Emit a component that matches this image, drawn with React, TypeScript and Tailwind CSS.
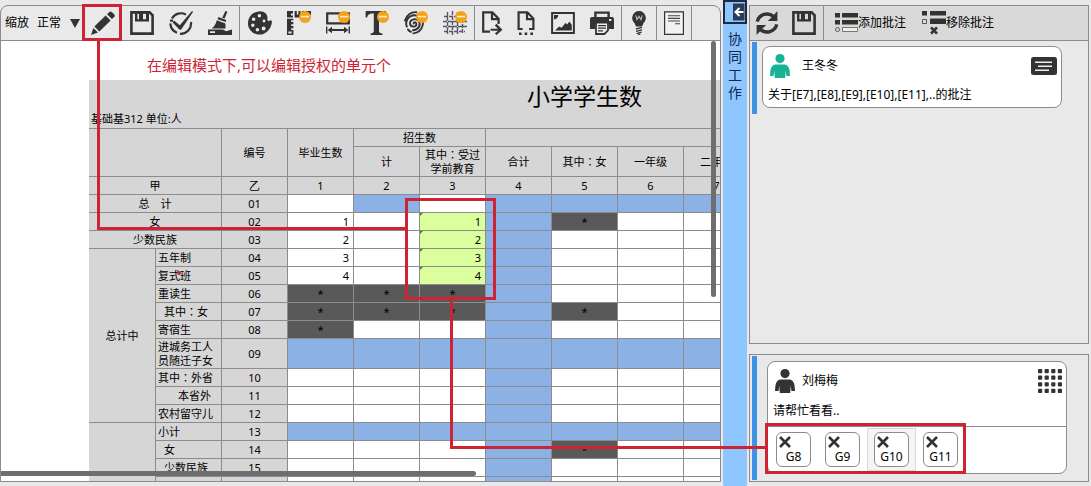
import type { ReactNode } from "react";
import clsx from "clsx";

type Fill = "none" | "blue" | "dark" | "green";
type Cell = { fill: Fill; value?: string };

const o: Cell = { fill: "none" };
const b: Cell = { fill: "blue" };
const d: Cell = { fill: "dark", value: "*" };
const n = (value: string): Cell => ({ fill: "none", value });
const g = (value: string): Cell => ({ fill: "green", value });

type Row = {
  code: string;
  label: string;
  group?: { text: string; span: number };
  wide?: boolean;
  indent?: string;
  tall?: boolean;
  cells: Cell[];
};

const rows: Row[] = [
  { code: "01", label: "总　计", wide: true, cells: [o, b, o, b, b, b, b] },
  { code: "02", label: "女", wide: true, cells: [n("1"), o, g("1"), b, d, o, o] },
  { code: "03", label: "少数民族", wide: true, cells: [n("2"), o, g("2"), b, o, o, o] },
  { code: "04", label: "五年制", group: { text: "总计中", span: 9 }, cells: [n("3"), o, g("3"), b, o, o, o] },
  { code: "05", label: "复式班", cells: [n("4"), o, g("4"), b, o, o, o] },
  { code: "06", label: "重读生", cells: [d, d, d, b, o, o, o] },
  { code: "07", label: "其中：女", indent: "pl-2", cells: [d, d, d, b, d, o, o] },
  { code: "08", label: "寄宿生", cells: [d, o, o, b, o, o, o] },
  { code: "09", label: "进城务工人员随迁子女", tall: true, cells: [b, b, b, b, b, b, b] },
  { code: "10", label: "其中：外省", cells: [o, o, o, b, o, o, o] },
  { code: "11", label: "本省外", indent: "pl-[22px]", cells: [o, o, o, b, o, o, o] },
  { code: "12", label: "农村留守儿", cells: [o, o, o, b, o, o, o] },
  { code: "13", label: "小计", group: { text: "", span: 4 }, cells: [b, b, b, b, b, b, b] },
  { code: "14", label: "女", indent: "pl-2", cells: [o, o, o, b, d, o, o] },
  { code: "15", label: "少数民族", indent: "pl-2", cells: [o, o, o, b, o, o, o] },
  { code: "", label: "", cells: [o, o, o, b, o, o, o] },
];

const line = "border-r border-b border-[#8c8c8c]";
const head = `${line} bg-[#d6d6d6] font-normal p-0 text-center`;

const fills: Record<Fill, string> = {
  none: "bg-white text-right pr-1",
  blue: "bg-[#8cb1e4]",
  dark: "bg-[#595959] text-center",
  green: "bg-[#dcff9e] text-right pr-1",
};

const Svg = ({ children, className = "size-6" }: { children: ReactNode; className?: string }) => (
  <svg viewBox="0 0 24 24" className={clsx("shrink-0", className)} fill="#333" aria-hidden="true">
    {children}
  </svg>
);

const Badge = () => (
  <g>
    <circle cx="18" cy="6" r="6" fill="#f5a21b" />
    <path d="M14 5.6H22" stroke="#fff0cc" strokeWidth="1.6" />
  </g>
);

const PencilIcon = () => (
  <Svg>
    <path d="M3.4 15.6 14.6 4.6 19.6 9.4 8.4 20.4zM16 3.3 18.3 1.1Q19.7 0 21 1.2L23.2 3.3Q24.4 4.6 23.2 6L20.9 8.1zM2.4 17 7 21.5 0 24z" />
  </Svg>
);

const SaveIcon = () => (
  <Svg>
    <path d="M1.4 1.4H19.6L22.6 4.4V22.6H1.4z" fill="none" stroke="#333" strokeWidth="2.6" />
    <path fillRule="evenodd" d="M5 1H19V10.5H5zM7.4 2.5V8.3H9V2.5zM13 2.5V8.3H16V2.5z" />
  </Svg>
);

const CheckIcon = () => (
  <Svg>
    <g fill="none" stroke="#333" strokeWidth="2.2">
      <path d="M17 3.6A10.4 10.4 0 0 0 3 7.4M1.4 12.4A10.4 10.4 0 0 0 8 21.8M11 22.8A10.4 10.4 0 0 0 22 11M1 9.6H4" />
    </g>
    <path d="M5 9.4 10.8 14.2 23 0 24 1 12 18.8 10.6 18.8 3.6 11.6z" />
  </Svg>
);

const BroomIcon = () => (
  <Svg>
    <path d="M17.4 0 19.4.7 16.6 7.6 14.2 6.8zM10.4 6 18.2 9 17.6 11 9.6 8.2zM8.8 9.2 17.4 12.4 17.6 17.6H3.6Q7.6 14.4 8.8 9.2z" />
    <path fillRule="evenodd" d="M0 18.4H15L18 20.2 24 18.6V24H0zM2 20.2H7V22H2z" />
  </Svg>
);

const PaletteIcon = () => (
  <Svg>
    <path
      fillRule="evenodd"
      d="M11 .4C17 0 20 4 19.4 7.6 19 10 20.4 10.4 22 9.4 23.8 8.6 24.2 11 23.6 13 22 19 17.6 23.6 11.8 23.6 5 23.6 0 18.4 0 12.4 0 5.6 4.6.8 11 .4zM11.4 3A1.8 1.8 0 1 0 11.4 6.6 1.8 1.8 0 1 0 11.4 3zM5.6 6.4A1.8 1.8 0 1 0 5.6 10 1.8 1.8 0 1 0 5.6 6.4zM4.8 12.4A1.8 1.8 0 1 0 4.8 16 1.8 1.8 0 1 0 4.8 12.4zM9.4 17A1.8 1.8 0 1 0 9.4 20.6 1.8 1.8 0 1 0 9.4 17zM15.6 15.4A2 2 0 1 0 15.6 19.4 2 2 0 1 0 15.6 15.4zM16 8.6A1.4 1.4 0 1 0 16 11.4 1.4 1.4 0 1 0 16 8.6z"
    />
  </Svg>
);

const RulerIcon = () => (
  <Svg>
    <path d="M0 0H6V2.4H4V4.4H6V6.4H0zM7.6 0H9.8V3.4H11.4V0H13.6V6.4H7.6zM15 0H24V4H15zM0 7.8H6.4V9.2H4.2V11H6.4V13.2H4.2V15H6.4V17.2H4.2V19H6.4V24H0zM1.4 20.6V22.4H4.6V20.6z" fillRule="evenodd" />
    <Badge />
  </Svg>
);

const WidthIcon = () => (
  <Svg>
    <path d="M1.2 2.4H22.8V12.4H1.2z" fill="none" stroke="#333" strokeWidth="2.2" />
    <path d="M0 15.6H1.4V22.4H0zM22.6 15.6H24V22.4H22.6zM1.6 19 6 15.8V18.1H18V15.8L22.4 19 18 22.2V19.9H6V22.2z" />
    <Badge />
  </Svg>
);

const TextIcon = () => (
  <Svg>
    <path d="M.6 0H21V6.4H19.6Q19 2.6 15.4 2.4H14V20Q14 22.4 17.4 22.6V24H5.6V22.6Q8.8 22.4 8.8 20V2.4H7Q3 2.6 2 6.4H.6z" />
    <Badge />
  </Svg>
);

const SpiralIcon = () => (
  <Svg>
    <g fill="none" stroke="#333" strokeWidth="1.9" strokeLinecap="round">
      <path d="M9.6 12.6C9.8 10.6 12.4 10.8 12.4 13.2 12.2 16.4 6.4 16.6 6 12.6 5.8 8 12.6 6.6 15 10.4 17.2 14.8 14 19 9 19.2" />
      <path d="M2.8 15.6C.6 9.6 5 4.2 10.6 4.2 16.8 4.2 20 9.4 18.6 14.4 17.6 18.6 14 21.8 9.4 22.4M1 9.6C2.6 3.8 7.4.8 12.4 1.2M4 18.6C5 20 6 20.4 7 20.8" />
    </g>
    <Badge />
  </Svg>
);

const GridIcon = () => (
  <Svg>
    <g fill="none" stroke="#555567" strokeWidth="1.4" strokeDasharray="4 1">
      <path d="M4.5 1V23M9.5 0V24M14.5 1V23M19.5 3V22M1 5.5H22M0 10.5H24M0 15.5H24M1 20.5H22" />
    </g>
    <Badge />
  </Svg>
);

const ExportIcon = () => (
  <Svg>
    <path d="M10 20.6H3.2V1.4H12.4L18.6 7.6V13M12 1.4V8.2H18.6" fill="none" stroke="#333" strokeWidth="2.2" />
    <path d="M10.6 17.8H18L14.8 14.4 16.6 12.8 22.4 18.8 16.6 24 14.8 22.6 18 19.8H10.6z" />
  </Svg>
);

const MoreDocIcon = () => (
  <Svg>
    <path d="M8.6 18H4.6V1.4H13.4L19.4 7.6V18H15M13 1.4V8.2H19.4" fill="none" stroke="#333" strokeWidth="2.2" />
    <path d="M5 21.4H7.6V24H5zM10.6 21.4H13.2V24H10.6zM16.4 21.4H19V24H16.4z" />
  </Svg>
);

const ImageIcon = () => (
  <Svg>
    <path d="M1.1 2.1H22.9V21.9H1.1z" fill="none" stroke="#333" strokeWidth="2" />
    <path d="M4 19.6 8 15.6 10.6 16.8 14.4 12 16.2 13.4 18.4 10.6 20.8 14V19.6zM3 4H7.4Q7 8 3 8.4z" />
  </Svg>
);

const PrintIcon = () => (
  <Svg>
    <path d="M5.4 7V1.6H18.6V7" fill="none" stroke="#333" strokeWidth="2.4" />
    <path fillRule="evenodd" d="M2 6H22Q24 6 24 8V18H19V13H5V18H0V8Q0 6 2 6zM19 8V10H21.4V8z" />
    <path d="M6 11.6H18V19.4L14.4 23H6z" fill="#eee" stroke="#333" strokeWidth="1.8" />
    <path d="M8 14.6H16M8 17.2H16M8 19.8H13" stroke="#333" strokeWidth="1.2" />
  </Svg>
);

const BulbIcon = () => (
  <Svg>
    <path d="M12 0A7 7 0 0 1 16.4 12.2L15 15.4H9L7.6 12.2A7 7 0 0 1 12 0z" />
    <path d="M8.8 4.4 10 8.6 12 5.4 14 8.6 15.2 4.4" fill="none" stroke="#bbb" strokeWidth="1.1" />
    <path d="M9 18 15 16.4M9 20.4 15 18.8M9.6 22.6 14.6 21.2M11 24 13.4 23" stroke="#333" strokeWidth="1.3" />
  </Svg>
);

const SheetIcon = () => (
  <Svg>
    <path d="M2.6.8H21.4V23.4H2.6z" fill="#f2f2f2" stroke="#333" strokeWidth="1.2" />
    <path d="M6 4.8H18M6 7.4H18M6 10H18M13 12.8H18" stroke="#444" strokeWidth="1.1" />
  </Svg>
);

const RefreshIcon = () => (
  <Svg>
    <path d="M2.2 10.6A10 10 0 0 1 18.6 5.6M21.8 13.4A10 10 0 0 1 5.4 18.4" fill="none" stroke="#333" strokeWidth="3.4" />
    <path d="M22.4 0V10H12.8L16.4 6.4zM1.6 24V14H11.2L7.6 17.6z" />
  </Svg>
);

const AddNoteIcon = () => (
  <Svg>
    <path d="M1 2H6V6.6H1zM1 9H6V13.6H1zM8 2H24V6.6H8zM8 9H24V13.6H8z" />
    <path d="M8.5 16.5H23.5V20.5H8.5z" fill="#eee" stroke="#777" />
    <circle cx="3.5" cy="18.5" r="2" fill="none" stroke="#555" />
  </Svg>
);

const RemoveNoteIcon = () => (
  <Svg>
    <path d="M0 0H5V4.6H0zM8 0H24V4.6H8zM8 7.4H24V13H8z" />
    <path d="M.5 8.5H4.5V12.5H.5z" fill="#ddd" stroke="#555" />
    <path d="M9 16.4 15 22.6M15 16.4 9 22.6" stroke="#333" strokeWidth="2.6" />
  </Svg>
);

const PersonIcon = ({ className }: { className: string }) => (
  <svg viewBox="0 0 20 24" className={clsx("h-6 w-5 shrink-0", className)} fill="currentColor" aria-hidden="true">
    <circle cx="10" cy="4.6" r="4.6" />
    <path d="M5 10.4H15Q20 11 20 22H16.4L15.8 16.4 15.2 24H4.8L4.2 16.4 3.6 22H0Q0 11 5 10.4z" />
  </svg>
);

const NoteIcon = () => (
  <svg viewBox="0 0 26 18" className="h-[18px] w-[26px]" aria-hidden="true">
    <rect width="26" height="18" rx="2.5" fill="#333" />
    <path d="M4 5.2H21M7 9.2H21M4 13.2H18" stroke="#eee" strokeWidth="1.5" />
  </svg>
);

const DotsIcon = () => (
  <Svg>
    {[0, 6.6, 13.2, 19.8].map((y) =>
      [0, 6.6, 13.2, 19.8].map((x) => <rect key={`${x}-${y}`} x={x} y={y} width="4.2" height="4.2" rx=".8" />)
    )}
  </Svg>
);

const Tool = ({ label, narrow, children }: { label: string; narrow?: boolean; children: ReactNode }) => (
  <button type="button" aria-label={label} className={clsx("flex h-full shrink-0 items-center justify-center", narrow ? "w-[34px]" : "w-[39px]")}>
    {children}
  </button>
);

const Divider = () => <span className="h-full w-px shrink-0 bg-[#8c8c8c]" />;

const Toolbar = () => (
  <div className="flex h-[35px] shrink-0 items-center overflow-hidden border-b border-[#8c8c8c] pl-1 text-xs">
    <label htmlFor="zoom" className="w-8 shrink-0">缩放</label>
    <span className="relative flex w-[46px] shrink-0 items-center">
      <select id="zoom" className="w-full appearance-none bg-transparent">
        <option>正常</option>
      </select>
      <svg viewBox="0 0 10 9" className="pointer-events-none absolute right-[3px] h-[9px] w-[10px]" aria-hidden="true">
        <path d="M0 0H10L5 9z" fill="#333" />
      </svg>
    </span>
    <Tool label="编辑"><PencilIcon /></Tool>
    <Tool label="保存"><SaveIcon /></Tool>
    <Tool label="检查"><CheckIcon /></Tool>
    <Tool label="清除"><BroomIcon /></Tool>
    <Divider />
    <Tool label="配色"><PaletteIcon /></Tool>
    <Tool label="标尺"><RulerIcon /></Tool>
    <Tool label="列宽"><WidthIcon /></Tool>
    <Tool label="字体"><TextIcon /></Tool>
    <Tool label="指纹"><SpiralIcon /></Tool>
    <Tool label="网格"><GridIcon /></Tool>
    <Divider />
    <Tool label="导出" narrow><ExportIcon /></Tool>
    <Tool label="更多" narrow><MoreDocIcon /></Tool>
    <Tool label="图片"><ImageIcon /></Tool>
    <Tool label="打印"><PrintIcon /></Tool>
    <Divider />
    <Tool label="提示" narrow><BulbIcon /></Tool>
    <Divider />
    <Tool label="说明" narrow><SheetIcon /></Tool>
    <Divider />
  </div>
);

// the TC face keeps the full-width colon in the middle of its box
const Label = ({ text }: { text: string }) => {
  const [before, after] = text.split("：");
  if (after === undefined) return <>{text}</>;
  return (
    <>
      {before}
      <span className="font-['Noto_Sans_CJK_TC',sans-serif] leading-none">：</span>
      {after}
    </>
  );
};

const Sheet = () => (
  <div className="ml-[88px] w-[991px] text-[11px] leading-[14px]">
    <div className="h-[49px] border-b border-[#8c8c8c] bg-[#d6d6d6]">
      <h1 className="h-8 text-center text-[23px] leading-8">小学学生数</h1>
      <p className="pl-0.5">基础基312 单位:人</p>
    </div>
    <table className="w-[661px] table-fixed border-separate border-spacing-0">
      <colgroup>
        <col className="w-[67px]" />
        {rows.slice(0, 9).map((r) => (
          <col key={r.code} className="w-[66px]" />
        ))}
      </colgroup>
      <thead>
        <tr className="h-[18px]">
          <th colSpan={2} rowSpan={2} className={head} />
          <th rowSpan={2} className={head}>编号</th>
          <th rowSpan={2} className={head}>毕业生数</th>
          <th colSpan={2} className={head}>招生数</th>
          <th colSpan={4} className={head} />
        </tr>
        <tr className="h-[30px]">
          {["计", "其中：受过学前教育", "合计", "其中：女", "一年级", "二年级"].map((t) => (
            <th key={t} className={head}><Label text={t} /></th>
          ))}
        </tr>
        <tr className="h-[18px]">
          <th colSpan={2} className={head}>甲</th>
          {["乙", "1", "2", "3", "4", "5", "6", "7"].map((t) => (
            <th key={t} className={head}>{t}</th>
          ))}
        </tr>
      </thead>
      <tbody>
        {rows.map((row) => (
          <tr key={row.code} className={row.tall ? "h-[30px]" : "h-[18px]"}>
            {row.group && <th rowSpan={row.group.span} className={head}>{row.group.text}</th>}
            <th
              colSpan={row.wide ? 2 : 1}
              className={clsx(line, "bg-[#d6d6d6] py-0 pr-0 font-normal", row.wide ? "pl-0 text-center" : "text-left", !row.wide && (row.indent ?? "pl-0.5"))}
            >
              <Label text={row.label} />
            </th>
            <th className={head}>{row.code}</th>
            {row.cells.map((cell, i) => (
              <td key={i} className={clsx(line, "relative py-0", fills[cell.fill])}>
                {cell.fill === "green" && <span className="absolute top-0 left-0 border-t-3 border-r-3 border-t-[#3f7d4a] border-r-transparent" />}
                {cell.value}
              </td>
            ))}
          </tr>
        ))}
      </tbody>
    </table>
  </div>
);

const Editor = () => (
  <main className="mt-[5px] mb-1 flex min-w-0 flex-1 flex-col rounded-t-lg border border-[#8c8c8c]">
    <Toolbar />
    <div className="relative min-h-0 flex-1 overflow-hidden bg-white">
      <p className="h-[39px] pt-3 pl-[146px] text-[15px] leading-6 text-[#cd2335]">在编辑模式下,可以编辑授权的单元个</p>
      <Sheet />
      <span className="absolute top-0 right-1 h-64 w-[5px] rounded-full bg-[#6e6e6e]" />
      <span className="absolute bottom-[5px] left-0 h-[5px] w-[475px] rounded-r-full bg-[#6e6e6e]" />
    </div>
  </main>
);

const SideTab = () => (
  <aside className="mx-0.5 flex w-6 shrink-0 flex-col items-center bg-[#8ec7ff]">
    <button type="button" aria-label="收起" className="h-6 w-6">
      <svg viewBox="0 0 24 24" className="size-6" aria-hidden="true">
        <path d="M1 1H23V23H1z" fill="#8ec7ff" stroke="#1d2a44" strokeWidth="2" />
        <path d="M10 3.5H21.5V20.5H10z" fill="#2b3a55" />
        <path d="M20.5 12H12.5M16.5 8 12.5 12 16.5 16" fill="none" stroke="#fff" strokeWidth="2" />
      </svg>
    </button>
    <p className="mt-1.5 w-3.5 text-center text-sm leading-[18px] text-[#14284e]">协同工作</p>
  </aside>
);

const Card = ({ name, color, text, icon, children }: { name: string; color: string; text: string; icon: ReactNode; children?: ReactNode }) => (
  <article className="w-[300px] rounded-lg border border-[#8c8c8c] bg-white">
    <div className="flex h-9 items-center pt-0.5 pr-1 pl-[7px]">
      <PersonIcon className={color} />
      <h2 className={clsx("flex-1", children ? "pl-[7px]" : "pl-3")}>{name}</h2>
      <button type="button" aria-label="详情">{icon}</button>
    </div>
    <p className={clsx("px-[5px] leading-[18px]", children ? "pt-1 pb-1.5" : "py-[3px]")}>{text}</p>
    {children}
  </article>
);

const Comments = () => (
  <section className="mt-[5px] mb-1 mr-0.5 flex w-[340px] shrink-0 flex-col text-xs">
    <div className="flex-1 border border-[#8c8c8c]">
      <div className="flex h-[35px] items-center border-b border-[#8c8c8c] bg-[#d9d9d9]">
        <Tool label="刷新" narrow><RefreshIcon /></Tool>
        <Tool label="保存"><SaveIcon /></Tool>
        <Divider />
        <button type="button" className="ml-2.5 flex items-center"><AddNoteIcon />添加批注</button>
        <button type="button" className="ml-4 flex items-center"><RemoveNoteIcon />移除批注</button>
      </div>
      <div className="flex items-start gap-[5px] pt-px pl-0.5">
        <span className="h-[72px] w-[5px] bg-[#3f93e6]" />
        <div className="pt-1">
          <Card name="王冬冬" color="text-[#18b394]" text="关于[E7],[E8],[E9],[E10],[E11],..的批注" icon={<NoteIcon />} />
        </div>
      </div>
    </div>
    <div className="mt-2.5 flex gap-2.5 border border-[#8c8c8c] py-px pl-0.5">
      <span className="w-[5px] bg-[#3f93e6]" />
      <div className="pt-[5px] pb-1.5">
        <Card name="刘梅梅" color="text-[#333]" text="请帮忙看看.." icon={<DotsIcon />}>
          <div className="flex border-t border-[#8c8c8c] pt-px pb-0.5 pl-px">
            {["G8", "G9", "G10", "G11"].map((cell) => (
              <span key={cell} className={clsx("flex w-[49px] justify-center border py-[3px]", cell === "G10" ? "border-[#d9d9d9] bg-[#f5f5f5]" : "border-transparent")}>
                <button type="button" className="flex size-[35px] flex-col rounded-md border border-[#8c8c8c] bg-white">
                  <svg viewBox="0 0 12 12" className="mt-[3px] ml-0.5 size-3" aria-hidden="true">
                    <path d="M1 1 11 11M11 1 1 11" stroke="#333" strokeWidth="2.6" />
                  </svg>
                  <span className="w-full pt-px text-center leading-4">{cell}</span>
                </button>
              </span>
            ))}
          </div>
        </Card>
      </div>
    </div>
  </section>
);

// red callouts drawn on top of the workspace
const Callouts = () => (
  <div className="pointer-events-none absolute inset-0 overflow-hidden">
    <span className="absolute top-1 left-[82px] h-[37px] w-10 border-3 border-[#cd2335]" />
    <span className="absolute top-[41px] left-[97px] h-[189px] w-[308px] border-b-3 border-l-3 border-[#cd2335]" />
    <span className="absolute top-[198px] left-[405px] h-[102px] w-[91px] border-3 border-[#cd2335]" />
    <span className="absolute top-[300px] left-[450px] h-[149px] w-[316px] border-b-3 border-l-3 border-[#cd2335]" />
    <span className="absolute top-[423px] left-[765px] h-[51px] w-[201px] border-3 border-[#cd2335]" />
    <span className="absolute top-[271px] left-[177px] size-1 rounded-full bg-[#cd2335]" />
  </div>
);

export default function App() {
  return (
    <div className="relative flex h-screen overflow-hidden bg-[#e9e9e9] font-['Noto_Sans','Noto_Sans_CJK_SC',sans-serif] text-black">
      <Editor />
      <SideTab />
      <Comments />
      <Callouts />
    </div>
  );
}
